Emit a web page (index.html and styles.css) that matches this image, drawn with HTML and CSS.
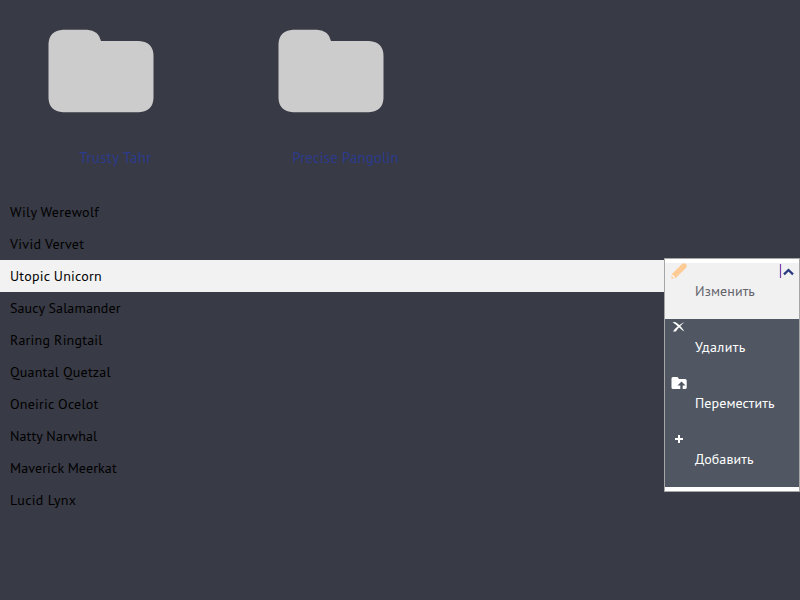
FILE: index.html
```
<!DOCTYPE html>
<html lang="ru">
<head>
<meta charset="utf-8">
<title>Folders</title>
<link rel="stylesheet" href="styles.css">
</head>
<body>
<main>
  <section class="folders">
    <a class="folder">
      <svg class="folder-icon" viewBox="0 0 106 84" width="106" height="84"><path d="M15 .7H39Q51 1.5 53 12H91Q105.500 13 105.500 27V69Q105 82.500 91 83.200H15Q1 82.500 .5 69V15Q1 1.500 15 .7Z"/></svg>
      <span class="folder-name loose">Trusty Tahr</span>
    </a>
    <a class="folder">
      <svg class="folder-icon" viewBox="0 0 106 84" width="106" height="84"><path d="M15 .7H39Q51 1.5 53 12H91Q105.500 13 105.500 27V69Q105 82.500 91 83.200H15Q1 82.500 .5 69V15Q1 1.500 15 .7Z"/></svg>
      <span class="folder-name">Precise Pangolin</span>
    </a>
  </section>
  <ul class="files">
    <li class="loose">Wily Werewolf</li>
    <li class="loose">Vivid Vervet</li>
    <li class="selected">Utopic Unicorn</li>
    <li class="tight">Saucy Salamander</li>
    <li>Raring Ringtail</li>
    <li>Quantal Quetzal</li>
    <li>Oneiric Ocelot</li>
    <li class="tight">Natty Narwhal</li>
    <li class="tight">Maverick Meerkat</li>
    <li class="loose">Lucid Lynx</li>
  </ul>
</main>
<nav class="menu">
  <div class="item active">
    <svg class="icon" width="16" height="16" viewBox="0 0 16 16"><path fill="#ffcb94" d="M.2 15.700 1.200 10.800 11 1Q13 -.6 14.900 1.100 16.500 3 14.900 5L5 14.700Z"/><path fill="#fff" d="m1.500 11.500 2.900 2.800-1.700.4-1.500-1.500Z"/></svg>
    <span>Изменить</span>
    <svg class="toggle" width="16" height="16" viewBox="0 0 16 16"><path d="M1.500 1V15" stroke="#7640a8" stroke-width="1.200"/><path d="M5 11.300 9.500 7 14 11.300" fill="none" stroke="#293a80" stroke-width="2.300"/></svg>
  </div>
  <div class="item">
    <svg class="icon" width="16" height="16" viewBox="0 0 16 16"><path fill="#fff" d="M1.500 3H4Q9 5.500 13.500 12.500 8 8.500 3.500 4.500ZM2 12.500Q6 6.500 13.500 3 8 7.500 4.800 12.500Z"/><path d="M3 3.500Q8 6 12 11.500" fill="none" stroke="#fff"/></svg>
    <span class="loose">Удалить</span>
  </div>
  <div class="item">
    <svg class="icon" width="16" height="16" viewBox="0 0 16 16"><path fill="#fff" d="M2 2H6.500L8 4H14Q15.700 4 15.700 5.500V12.500Q15.700 14 14 14H2Q.5 14 .5 12.500V3.500Q.5 2 2 2Z"/><path fill="#505763" d="m10.500 6.500 4 4h-2.800V14H9.300V10.500H6.500Z"/></svg>
    <span>Переместить</span>
  </div>
  <div class="item">
    <svg class="icon" width="16" height="16" viewBox="0 0 16 16"><path d="M8 4V12M4 8H12" stroke="#fff" stroke-width="2"/></svg>
    <span>Добавить</span>
  </div>
</nav>
</body>
</html>
```
FILE: styles.css
```
* { box-sizing: border-box; }
body {
  margin: 0;
  height: 600px;
  overflow: hidden;
  background: #383a45;
  color: #000;
  font: 14px/32px "PT Sans", "Noto Sans", sans-serif;
}
.folders { display: flex; height: 196px; }
.folder {
  display: flex;
  flex-direction: column;
  width: 230px;
  padding-top: 29px;
}
.folder-icon { margin-left: 48px; fill: #ccc; flex: none; }
.folder-name {
  margin-top: 29px;
  width: 231px;
  text-align: center;
  color: #2c3b8c;
  font-size: 15px;
  letter-spacing: 0.07px;
}
.files { list-style: none; margin: 0; padding: 0; letter-spacing: 0.22px; }
.files li { height: 32px; padding-left: 10px; }
.files .selected { background: #f2f2f2; }
.tight { letter-spacing: 0.12px; }
.loose { letter-spacing: 0.32px; }
.menu {
  position: absolute;
  left: 664px;
  top: 258px;
  width: 136px;
  height: 234px;
  padding: 4px 0;
  border: 1px solid #a6a6a6;
  background: #fff;
}
.item {
  display: flex;
  height: 56px;
  background: #505763;
  color: #fff;
}
.item span { margin: 12px 0 0 8px; white-space: nowrap; letter-spacing: 0.1px; }
.item .loose { letter-spacing: 0.42px; }
.icon { flex: none; margin-left: 6px; }
.active { background: #f1f1f1; color: #63636b; }
.toggle { margin-left: auto; margin-right: 4px; }
```
